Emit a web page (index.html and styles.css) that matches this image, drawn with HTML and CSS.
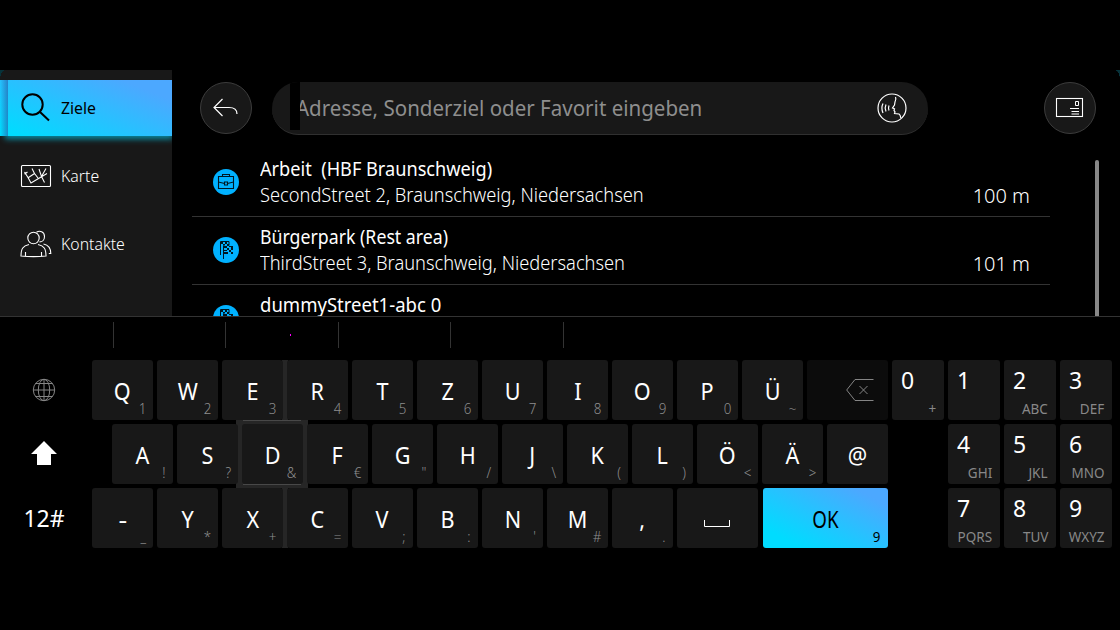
FILE: index.html
```
<!DOCTYPE html>
<html lang="de">
<head>
<meta charset="utf-8">
<title>Ziele</title>
<link rel="stylesheet" href="styles.css">
</head>
<body>
<svg width="0" height="0" class="defs">
  <symbol id="flag" viewBox="0 0 26 26">
    <circle cx="13" cy="13" r="13" fill="#00b1ff"/>
    <path fill="none" stroke="#001722" d="M7.500 4.500V18M10.500 8.500V22M7.500 4.500h8.500v4"/>
    <path fill="#001722" d="M8 5h2v2H8zM12 5h2v2h-2zM10 7h2v1.500h-2zM14 7h2v2h-2zM11 9h3v2h-3zM16 9h4v1h-4zM14 11h2v2h-2zM18 10h2v3h-2zM11 13h3v1h-3zM16 13h2v2h-2zM11 15h4v2h-4zM18 15h2v2h-2z"/>
  </symbol>
</svg>
<main class="screen">
  <section class="upper">
    <nav class="sidebar">
      <a class="tab active"><svg width="32" height="32" viewBox="0 0 32 32" fill="none" stroke="#000" stroke-width="2"><circle cx="12.500" cy="12.500" r="10.200"/><path d="M19.500 19.500 29 28.500"/></svg><span>Ziele</span></a>
      <a class="tab"><svg width="32" height="32" viewBox="0 0 32 32" fill="none" stroke="#fff" stroke-width="1.100"><rect x="1.500" y="5.500" width="29" height="21" rx="1"/><path d="M4.500 12 8 17.500l3 5.500L27 13.500M12 8.500l2.500 5-6 4M14.500 13.500l3.500 4.500M19 9l2.500 7.500 4.500-8M21.500 16.500l3 6M4.500 14l3-2"/></svg><span>Karte</span></a>
      <a class="tab"><svg width="32" height="32" viewBox="0 0 32 32" fill="none" stroke="#fff" stroke-width="1.100"><circle cx="13.500" cy="10" r="5.700"/><path d="M16.500 4.200c3-2 8-.8 8 4.200 0 3-2 5.500-5 5.500M9 16.500c-6 1.500-8 4-8 11.500q12.500 1.200 25 0c0-7.500-2-10-8-11.500M5.500 24v4M21.500 24v4M23.500 16c5 1 7.300 4 7.300 9.500h-2"/></svg><span>Kontakte</span></a>
    </nav>
    <div class="content">
      <header class="bar">
        <button class="round"><svg width="52" height="52" viewBox="0 0 52 52" fill="none" stroke="#fff" stroke-width="1.200"><path d="M22.500 17 14 25.500l8.500 8.500M14 25.500h15q8 0 8 6.500"/></svg></button>
        <div class="search"><i class="cursor"></i><span class="placeholder">Adresse, Sonderziel oder Favorit eingeben</span>
          <svg class="voice" width="30" height="30" viewBox="0 0 30 30" fill="none" stroke="#fff" stroke-width="1.200"><circle cx="15" cy="15" r="14"/><path d="M18.500 4c1 2 .5 3-.5 5l-.5 3-2 3 2 .800-.5 1.500 1 1.500-.5 1.700 4.500.500q1.500 1 1.800 4M6 10.500q-2.200 4.500 0 9.500M9 11.500q-1.700 3.500 0 7M12 12.500q-1 2.500 0 5"/></svg>
        </div>
        <button class="round"><svg width="52" height="52" viewBox="0 0 52 52" fill="none" stroke="#fff"><rect x="12.500" y="16.500" width="26" height="18" stroke-width="1.100"/><path d="M31.500 19.500h3v4h-3zM26 26.500h9M27.500 29.500H35M27.500 32H35"/></svg></button>
      </header>
      <div class="results">
        <article class="row">
          <svg class="pin" width="26" height="26" viewBox="0 0 26 26"><circle cx="13" cy="13" r="13" fill="#00b1ff"/><path d="M5.500 7.500h15v12h-15zM9.500 7.500v-2h7v2M5.500 13l6 1.500M20.500 13l-6 1.500M11.500 13h3v3h-3z" fill="none" stroke="#001722" stroke-width="1.100"/></svg>
          <div class="place"><h2>Arbeit &nbsp;(HBF Braunschweig)</h2><p>SecondStreet 2, Braunschweig, Niedersachsen</p></div>
          <span class="dist">100 m</span>
        </article>
        <article class="row">
          <svg class="pin" width="26" height="26"><use href="#flag"/></svg>
          <div class="place"><h2 class="tight">Bürgerpark (Rest area)</h2><p>ThirdStreet 3, Braunschweig, Niedersachsen</p></div>
          <span class="dist">101 m</span>
        </article>
        <article class="row">
          <svg class="pin" width="26" height="26"><use href="#flag"/></svg>
          <div class="place"><h2 class="loose">dummyStreet1-abc 0</h2></div>
        </article>
      </div>
    </div>
    <div class="scrollbar"></div>
    <i class="corner left"></i><i class="corner right"></i>
  </section>
  <section class="suggest"><span></span><span></span><span></span><span></span><span></span><i class="dot"></i></section>
  <section class="keyboard">
    <div class="modes">
      <div class="mode"><svg width="24" height="24" viewBox="0 0 24 24" fill="none" stroke="#858585"><circle cx="12" cy="12" r="10.700"/><ellipse cx="12" cy="12" rx="5.700" ry="10.700"/><path d="M12 1v22M1.500 12h21M3.500 5.500h17M3.500 18.500h17"/></svg></div>
      <div class="mode shift"><svg width="26" height="24" viewBox="0 0 26 24"><path d="M13 0 26 13H20V24H6V13H0z" fill="#fff"/></svg></div>
      <div class="mode sym">12#</div>
    </div>
    <div class="letters">
      <i class="focus tall"></i><i class="focus wide"></i>
      <div class="keys">
        <b class="key"><span>Q</span><small>1</small></b>
        <b class="key"><span>W</span><small>2</small></b>
        <b class="key"><span>E</span><small>3</small></b>
        <b class="key"><span>R</span><small>4</small></b>
        <b class="key"><span>T</span><small>5</small></b>
        <b class="key"><span>Z</span><small>6</small></b>
        <b class="key"><span>U</span><small>7</small></b>
        <b class="key"><span>I</span><small>8</small></b>
        <b class="key"><span>O</span><small>9</small></b>
        <b class="key"><span>P</span><small>0</small></b>
        <b class="key"><span>Ü</span><small>~</small></b>
        <b class="key back"><svg width="28" height="22" viewBox="0 0 28 22" fill="none" stroke="#858585"><path d="M27.500.500H9L.7 11 9 21.500h18.500M13.500 7l8 8M21.500 7l-8 8"/></svg></b>
      </div>
      <div class="keys inset">
        <b class="key"><span>A</span><small>!</small></b>
        <b class="key"><span>S</span><small>?</small></b>
        <b class="key"><span>D</span><small>&amp;</small></b>
        <b class="key"><span>F</span><small>€</small></b>
        <b class="key"><span>G</span><small>"</small></b>
        <b class="key"><span>H</span><small>/</small></b>
        <b class="key"><span>J</span><small>\</small></b>
        <b class="key"><span>K</span><small>(</small></b>
        <b class="key"><span>L</span><small>)</small></b>
        <b class="key"><span>Ö</span><small>&lt;</small></b>
        <b class="key"><span>Ä</span><small>&gt;</small></b>
        <b class="key"><span>@</span></b>
      </div>
      <div class="keys">
        <b class="key"><span class="dash">-</span><small>_</small></b>
        <b class="key"><span>Y</span><small>*</small></b>
        <b class="key"><span>X</span><small>+</small></b>
        <b class="key"><span>C</span><small>=</small></b>
        <b class="key"><span>V</span><small>;</small></b>
        <b class="key"><span>B</span><small>:</small></b>
        <b class="key"><span>N</span><small>'</small></b>
        <b class="key"><span>M</span><small>#</small></b>
        <b class="key"><span>,</span><small>.</small></b>
        <b class="key space"><svg width="26" height="8" viewBox="0 0 26 8" fill="none" stroke="#fff"><path d="M.500 0v6.500h25V0"/></svg></b>
        <b class="key ok"><span>OK</span><small>9</small></b>
      </div>
    </div>
    <div class="pad">
      <b class="num">0<small>+</small></b><b class="num">1</b><b class="num">2<small>ABC</small></b><b class="num">3<small>DEF</small></b>
      <b class="num second">4<small>GHI</small></b><b class="num">5<small>JKL</small></b><b class="num">6<small>MNO</small></b>
      <b class="num second">7<small>PQRS</small></b><b class="num">8<small>TUV</small></b><b class="num">9<small>WXYZ</small></b>
    </div>
  </section>
</main>
</body>
</html>
```
FILE: styles.css
```
* { box-sizing: border-box; margin: 0; padding: 0; }
body { background: #000; color: #fff; font-family: "Noto Sans", sans-serif; font-weight: 300; overflow: hidden; }
svg { display: block; flex: none; }
.defs { position: absolute; }
.screen { width: 1120px; height: 630px; padding-top: 70px; }
.upper { position: relative; display: flex; height: 247px; border-bottom: 1px solid #333; overflow: hidden; }
.sidebar { width: 172px; padding-top: 10px; background: #181818; display: flex; flex-direction: column; gap: 12px; }
.tab { height: 56px; display: flex; align-items: center; gap: 9px; padding-left: 20px; font-size: 17px; white-space: nowrap; }
.tab svg { margin-top: -1px; }
.tab span { padding-bottom: 2px; transform: scaleX(.93); transform-origin: 0 50%; }
.active { color: #000; font-weight: 400; background: linear-gradient(90deg, rgba(30,110,180,0) 0, rgba(40,95,170,.65) 8px, transparent 8px), linear-gradient(22deg, #00dcff 6%, #4ca8ff 84%); box-shadow: 3px 5px 6px -2px rgba(0,205,240,.65); clip-path: inset(0 0 -10px 0); }
.content { width: 924px; padding: 12px 0 0 20px; }
.bar { display: flex; align-items: flex-start; padding-left: 8px; height: 53px; }
.round { width: 52px; height: 52px; flex: none; border-radius: 50%; border: 1px solid #3c3c3c; background: #181818; display: grid; place-items: center; }
.round svg { margin: -1px; }
.search { position: relative; width: 656px; height: 53px; flex: none; margin: 0 116px 0 20px; border-radius: 27px; background: #181818; border-bottom: 1px solid #303030; display: flex; align-items: center; padding-left: 24px; overflow: hidden; }
.cursor { position: absolute; left: 18px; top: 0; width: 10px; height: 48px; background: #000; z-index: 1; }
.placeholder { color: #8e8e8e; font-size: 22px; font-weight: 400; white-space: nowrap; transform: scaleX(.933); transform-origin: 0 50%; margin-top: -3px; }
.voice { margin-left: auto; margin-right: 21px; }
.results { padding-top: 14px; }
.row { width: 858px; height: 68px; display: flex; align-items: center; border-bottom: 1px solid #333; padding: 0 20px 0 21px; white-space: nowrap; }
.pin { margin-top: -1px; }
.place { margin-left: 21px; height: 53px; flex: 1; }
h2, p { font-size: 20px; line-height: 26px; font-weight: 400; transform: scaleX(.908); transform-origin: 0 50%; }
p { font-weight: 300; transform: scaleX(.913); }
.tight { transform: scaleX(.886); }
.loose { transform: scaleX(.926); }
.dist { font-size: 20px; line-height: 26px; padding-top: 26px; }
.scrollbar { width: 4px; height: 157px; margin: 90px 0 0 -1px; border-radius: 2px 2px 0 0; background: #888; }
.corner { position: absolute; top: 0; width: 5px; height: 10px; }
.corner.left { left: 0; background: radial-gradient(ellipse 5px 10px at 100% 100%, transparent 96%, #07333b); }
.corner.right { right: 0; background: radial-gradient(ellipse 5px 10px at 0 100%, transparent 96%, #07333b); }
.suggest { position: relative; display: flex; height: 43px; padding: 5px 0 0 1px; }
.suggest span { width: 112.500px; height: 26px; border-right: 1px solid #333; }
.dot { position: absolute; left: 290px; top: 17px; width: 1px; height: 2px; background: #f0f; }
.keyboard { display: flex; height: 188px; }
.modes { width: 92px; padding-right: 5px; display: flex; flex-direction: column; gap: 4px; }
.mode { height: 60px; display: grid; place-items: center; }
.shift { padding-bottom: 2px; }
.sym { font-size: 23px; font-weight: 400; padding: 0 0 1px 1px; }
.letters { position: relative; width: 796px; display: flex; flex-direction: column; gap: 4px; }
.keys { position: relative; display: flex; gap: 4px; }
.inset { padding-left: 20px; }
.key { position: relative; width: 61px; height: 60px; flex: none; display: grid; place-items: center; padding-top: 1px; border-radius: 3px; background: #181818; font-weight: 400; font-size: 23.500px; line-height: 30px; }
.key span { transform: scaleX(.92); }
.key .dash { transform: scaleX(1.15); }
.key small { position: absolute; right: 7px; bottom: 1px; color: #8e8e8e; font-size: 14.500px; line-height: 22px; font-weight: 300; transform: scaleX(.92); transform-origin: 100% 50%; }
.back { width: 81px; background: #0c0c0c; padding: 0 0 0 24px; }
.space { width: 81px; padding: 11px 1px 0 0; }
.ok { width: 125px; margin-left: 1px; color: #000; background: linear-gradient(28deg, #00dcff 16%, #4ca8ff 86%); }
.ok span { transform: scaleX(.8); }
.ok small { color: #000; font-weight: 400; right: 8px; }
.focus { position: absolute; background: #262626; }
.tall { left: 190px; top: 0; width: 6px; height: 188px; }
.wide { left: 144px; top: 60px; width: 72px; height: 68px; background: linear-gradient(#484848, #484848) 7px 0 / 58px 1px no-repeat, linear-gradient(#484848, #484848) 7px 64px / 58px 1px no-repeat, #262626; }
.pad { display: grid; grid-template-columns: repeat(4, 52px); grid-auto-rows: 60px; gap: 4px; margin-left: 4px; }
.num { position: relative; border-radius: 3px; background: #181818; padding: 4px 9px; font-size: 23px; line-height: 32px; font-weight: 400; }
.second { grid-column: 2; }
.num small { position: absolute; right: 8px; bottom: 1px; color: #888; font-size: 14.500px; line-height: 21px; transform: scaleX(.93); transform-origin: 100% 50%; }
```
